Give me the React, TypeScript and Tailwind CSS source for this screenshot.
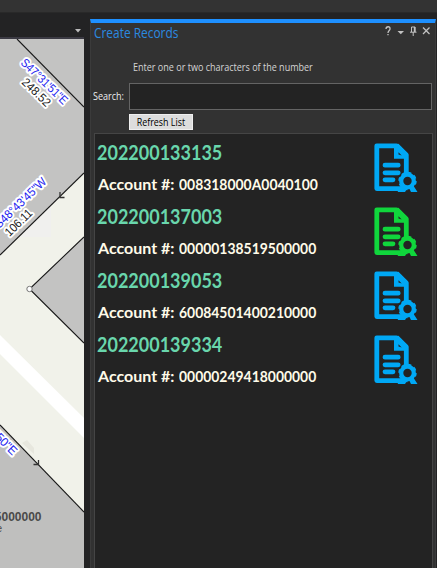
import React from "react";

const ui = "font-['Open_Sans','Noto_Sans',sans-serif]";

const records = [
  { id: "202200133135", account: "008318000A0040100", color: "#00a8f5" },
  { id: "202200137003", account: "00000138519500000", color: "#10d63c" },
  { id: "202200139053", account: "60084501400210000", color: "#00a8f5" },
  { id: "202200139334", account: "00000249418000000", color: "#00a8f5" },
];

function CertificateIcon({ color }: { color: string }) {
  return (
    <svg width="44" height="50" viewBox="0 0 44 50" className="mt-px shrink-0" fill="none" stroke={color}>
      <path d="M28 45.6H2.8V2.8H22.5L32.3 12V33" strokeWidth="4.8" strokeLinejoin="round" />
      <path d="M20 2V15.8H34V10.5L24.5 0.8Z" fill={color} stroke="none" />
      <path d="M24.5 9.2l3.2 3.2-3.2-.8z" fill="#232323" stroke="none" />
      <path d="M11 22.2H24.2M11 29.8H24.2M11 36.8H19" strokeWidth="4.8" strokeLinecap="round" />
      <path d="M28 42L23.5 49H31L33 46L35 45L37 49H43.5L39 42Z" fill={color} stroke="none" />
      <circle cx="33.5" cy="38" r="6.3" strokeWidth="4.2" fill="#232323" />
      <circle cx="33.5" cy="38" r="8.4" strokeWidth="1.6" strokeDasharray="3.6 3" />
    </svg>
  );
}

function ParcelMap() {
  const halo = { stroke: "#fff", strokeWidth: 4, strokeLinejoin: "round" as const, paintOrder: "stroke" };
  return (
    <svg width="84" height="529" viewBox="0 39 84 529" className="block font-['Liberation_Sans',Arial,sans-serif]">
      <rect y="39" width="84" height="529" fill="#c3c3c2" />
      <path d="M0 255L84 173V512L0 425Z" fill="#f1f2ea" />
      <path d="M0 425L84 512V568H0Z" fill="#bfbfbe" />
      <path d="M25 231L51 206V237H20Z" fill="#f0f0ee" />
      <path d="M0 335L84 418V438L0 354Z" fill="#fff" />
      <path d="M84 237L29.5 289L84 343Z" fill="#c3c3c2" />
      <path d="M22 443L27 440L34 448L34 454Z" fill="#e7e7de" />
      <g stroke="#171717" strokeWidth="1.1" fill="none">
        <path d="M17 39L84 107" />
        <path d="M0 255L84 173" />
        <path d="M84 237L29.5 289L84 343" />
        <path d="M0 425L84 512" />
        <path d="M60 192V197.5H64.5M38.5 460V464.5H33.5" stroke="#333" strokeWidth="1.3" />
      </g>
      <circle cx="29.5" cy="289" r="2.7" fill="#fff" stroke="#777" />
      <g fontSize="12" {...halo}>
        <text transform="translate(20 63.5) rotate(44)" textLength="60" lengthAdjust="spacingAndGlyphs" fill="#1c1cf0">S47°31'51"E</text>
        <text transform="translate(21 83) rotate(44)" textLength="35" lengthAdjust="spacingAndGlyphs" fill="#171717">248.52</text>
        <text transform="translate(-1 229) rotate(-44)" textLength="67" lengthAdjust="spacingAndGlyphs" fill="#1c1cf0">S48°43'45"W</text>
        <text transform="translate(9.5 237) rotate(-44)" textLength="33" lengthAdjust="spacingAndGlyphs" fill="#171717">106.11</text>
        <text transform="translate(12.5 456) rotate(45)" textAnchor="end" fill="#1c1cf0">'50"E</text>
      </g>
      <text x="41.5" y="521" textAnchor="end" fontSize="12" fontWeight="700" fill="#4a4a4a">5000000</text>
      <text x="2" y="532" textAnchor="end" fontSize="10" fill="#4a4a4a">e</text>
    </svg>
  );
}

function WindowControls() {
  return (
    <svg width="48" height="14" viewBox="386 24 48 14" fill="none" stroke="#c2c2c2" strokeWidth="1.3">
      <path d="M387 29C387 26 391.5 26 391 29C391 30.5 389 30.5 389 33M389 34V35.3" />
      <path d="M398.5 31H405L401.8 34.3Z" fill="#c2c2c2" stroke="none" />
      <path d="M412.5 32V27H416V32M411 32.2H417.5M414.2 32V36" strokeWidth="1" />
      <path d="M415.6 27V32" strokeWidth="1.6" />
      <path d="M424 27.5L430.5 34M430.5 27.5L424 34" />
    </svg>
  );
}

export default function App() {
  return (
    <div className={`flex h-[568px] w-[437px] flex-col overflow-hidden bg-[#232324] ${ui}`}>
      <div className="h-[13px] shrink-0 border-b border-[#292929] bg-[#333333]" />
      <div className="flex min-h-0 flex-1">
        <aside className="w-[84px] shrink-0">
          <div className="flex h-[26px] justify-end border-b-2 border-[#3b3a43] pt-4 pr-[3px]">
            <svg width="6" height="4" viewBox="0 0 6 4">
              <path d="M0 0H6L3 3.5Z" fill="#bcbcbc" />
            </svg>
          </div>
          <ParcelMap />
        </aside>
        <main className="mt-[6px] ml-[6px] flex w-[346px] flex-col border-x border-t-4 border-x-[#3b3b3b] border-t-[#1e90ff] bg-[#323232]">
          <header className="flex h-[36px] justify-between pr-[2px] pl-[3px]">
            <h1 className="w-[100px] origin-left scale-x-[0.85] pt-px text-[14px] leading-[18px] whitespace-nowrap text-[#2b8ae0]">Create Records</h1>
            <div className="pt-px">
              <WindowControls />
            </div>
          </header>
          <p className="ml-[42px] h-[24px] w-[220px] origin-left scale-x-[0.82] text-[11px] leading-4 whitespace-nowrap text-[#d4d4d4]">
            Enter one or two characters of the number
          </p>
          <div className="flex items-center pl-[2px]">
            <label htmlFor="q" className="w-9 origin-left scale-x-[0.82] text-[11px] whitespace-nowrap text-[#ededed]">Search:</label>
            <input id="q" className="h-[27px] w-[303px] border border-[#646464] bg-[#232323]" />
          </div>
          <button className="mt-[4px] ml-[38px] flex h-4 w-16 justify-center border border-[#efefef] bg-[#dddddd] text-[11px] leading-[14px] whitespace-nowrap text-black">
            <span className="scale-x-[0.81]">Refresh List</span>
          </button>
          <section className="mt-[3px] ml-[3px] min-h-0 w-[339px] flex-1 border border-b-0 border-[#454545] bg-[#232323] font-['Lato','Open_Sans',sans-serif] font-bold">
            {records.map((r) => (
              <article key={r.id} className="flex h-16 items-start justify-between pt-[8px] pr-[14px] pl-[2px]">
                <div className="whitespace-nowrap">
                  <h2 className="w-[145px] origin-left scale-x-[0.9] text-[20px] leading-5 text-[#69d6ac]">{r.id}</h2>
                  <p className="mt-3 flex pl-px text-[16px] leading-5 text-[#fffbe9]">
                    <span className="w-[81px]">Account #:</span>
                    <span className="origin-left scale-x-[0.87]">{r.account}</span>
                  </p>
                </div>
                <CertificateIcon color={r.color} />
              </article>
            ))}
          </section>
        </main>
      </div>
    </div>
  );
}
